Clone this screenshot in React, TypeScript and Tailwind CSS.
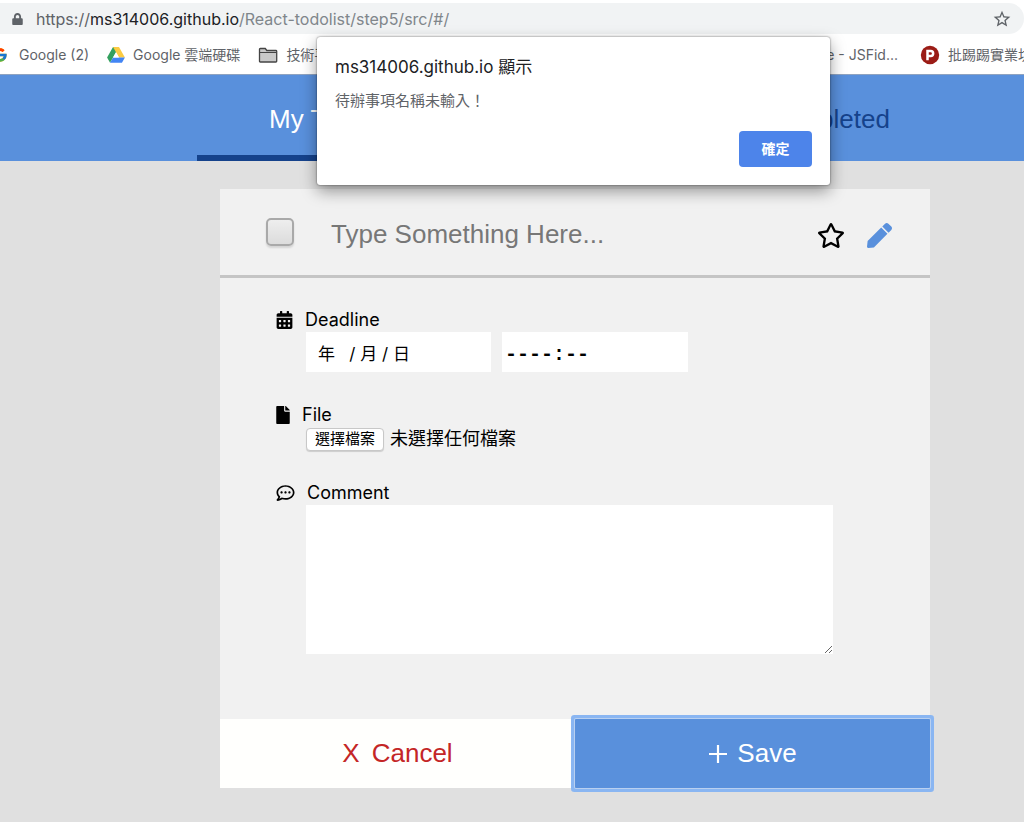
import React from "react";
import { FaLock, FaRegStar, FaPen, FaCalendarAlt, FaFile, FaRegCommentDots } from "react-icons/fa";
import { MdStarBorder } from "react-icons/md";
import { FcGoogle } from "react-icons/fc";

function DriveIcon() {
  return (
    <svg viewBox="0 0 87 78" className="h-4 w-[18px] shrink-0" aria-hidden="true">
      <path d="M29 0h29L29 51 14.500 77 0 51z" fill="#34a05f" />
      <path d="M29 0h29l29 51H58z" fill="#fbcb43" />
      <path d="M29 51h58L72.500 77h-58z" fill="#4285f4" />
      <path d="M43.500 25.500 58 51H29z" fill="#fff" />
    </svg>
  );
}

function FolderIcon() {
  return (
    <svg viewBox="0 0 20 16" className="h-4 w-5 shrink-0" aria-hidden="true">
      <path d="M1.500 14.200V2.300q0-.8.8-.8h5l1.500 2h9.100q.8 0 .8.800v9.900q0 .8-.8.8H2.300q-.8 0-.8-.8z" fill="#c9c9c9" stroke="#444" strokeWidth="1.300" />
      <path d="M1.500 5.500h17" stroke="#444" strokeWidth="1" />
    </svg>
  );
}

function PttIcon() {
  return (
    <svg viewBox="0 0 20 20" className="h-5 w-5 shrink-0" aria-hidden="true">
      <circle cx="10" cy="10" r="9.200" fill="#9b1c16" />
      <path d="M7.500 15.200V6h3.200a2.300 2.300 0 0 1 0 4.900H7.500" fill="none" stroke="#fff" strokeWidth="2.500" />
    </svg>
  );
}

function PlusIcon() {
  return (
    <svg viewBox="0 0 20 20" className="h-5 w-5" aria-hidden="true">
      <path d="M10 1v18M1 10h18" stroke="currentColor" strokeWidth="2.200" />
    </svg>
  );
}

function BrowserBar() {
  return (
    <header className="h-[75px] overflow-hidden border-b border-[#8fa3c0] bg-white pt-[3px]">
      <div className="flex h-[31px] items-center rounded-r-full bg-[#f1f3f4] pr-3 pl-3">
        <FaLock className="mr-[13px] h-3 w-[11px] shrink-0 text-[#5f6368]" />
        <p className="flex-1 text-base leading-6 text-[#80868b]">
          <span className="text-[#5f6368]">https://</span>
          <span className="text-[#202124]">ms314006.github.io</span>/React-todolist/step5/src/#/
        </p>
        <button type="button" aria-label="Bookmark">
          <MdStarBorder className="h-5 w-5 text-[#5f6368]" />
        </button>
      </div>
      <nav className="flex h-[41px] items-center text-sm whitespace-nowrap text-[#5f6368]">
        <a href="#google" className="-ml-2 flex items-center gap-[11px]">
          <FcGoogle className="h-4 w-4" />Google (2)
        </a>
        <a href="#drive" className="ml-[18px] flex items-center gap-2">
          <DriveIcon />Google 雲端硬碟
        </a>
        <a href="#tech" className="ml-[18px] flex items-center gap-2">
          <FolderIcon />技術平台
        </a>
        <a href="#fiddle" className="ml-auto">Code - JSFid...</a>
        <a href="#ptt" className="ml-[22px] flex w-[104px] items-center gap-2 overflow-hidden">
          <PttIcon />批踢踢實業坊
        </a>
      </nav>
    </header>
  );
}

function AlertDialog() {
  return (
    <div role="alertdialog" aria-labelledby="alert-title" className="absolute top-[37px] left-[317px] flex h-[148px] w-[513px] flex-col rounded-[3px] bg-white px-[18px] pt-[18px] pb-[18px] shadow-[0_6px_16px_rgba(0,0,0,0.4),0_0_2px_rgba(0,0,0,0.6)]">
      <h2 id="alert-title" className="text-[17px] leading-6 text-[#202124]">ms314006.github.io 顯示</h2>
      <p className="mt-3 text-[15px] leading-5 text-[#5f6368]">待辦事項名稱未輸入！</p>
      <button type="button" className="mt-auto h-9 w-[73px] self-end rounded bg-[#4d84ea] text-sm font-bold text-white">確定</button>
    </div>
  );
}

function Tabs() {
  return (
    <nav className="flex h-[86px] bg-[#5990dc] pl-[197px] font-['Liberation_Sans',sans-serif] text-[26px] text-[#15428b]">
      <a href="#/" className="flex w-[252px] items-center justify-center border-b-[6px] border-[#15428b] pt-2 text-white">My Tasks</a>
      <a href="#/progress" className="flex w-[252px] items-center justify-center pt-[2px]">In Progress</a>
      <a href="#/completed" className="flex w-[252px] items-center justify-center pt-[2px]">Completed</a>
    </nav>
  );
}

function TaskCard() {
  return (
    <form className="mt-7 mr-[94px] ml-[220px] bg-[#f1f1f1]">
      <div className="flex h-[89px] items-center border-b-[3px] border-[#c5c5c5] pr-[38px] pl-[46px]">
        <input type="checkbox" aria-label="Done" className="h-7 w-7 shrink-0 appearance-none rounded-[5px] border-2 border-[#a9a9a9] bg-linear-to-b from-[#eeeeee] to-[#dcdcdc] shadow-[0_2px_2px_rgba(0,0,0,0.12)]" />
        <input type="text" aria-label="Task name" placeholder="Type Something Here..." className="ml-[37px] h-11 min-w-0 flex-1 bg-transparent pt-1 font-['Liberation_Sans',sans-serif] text-[26px] outline-none placeholder:text-[#777]" />
        <div className="flex items-center gap-[22px] pt-[6px]">
          <button type="button" aria-label="Star"><FaRegStar className="h-[25px] w-7 text-black" /></button>
          <button type="button" aria-label="Edit"><FaPen className="h-[25px] w-[25px] text-[#5990dc]" /></button>
        </div>
      </div>
      <div className="pt-[30px] pr-[97px] pb-[65px] pl-14 text-lg leading-6 text-black">
        <label htmlFor="date" className="flex items-center gap-3"><FaCalendarAlt className="h-[18px] w-[17px]" />Deadline</label>
        <div className="flex gap-[11px] pl-[30px]">
          <input id="date" type="text" defaultValue="年   / 月 / 日" className="h-10 w-[185px] bg-white px-3 text-[17px]" />
          <input type="text" aria-label="Time" defaultValue="----:--" className="h-10 w-[186px] bg-white px-[3px] pt-1 font-['Liberation_Mono',monospace] text-xl font-bold" />
        </div>
        <label htmlFor="file" className="mt-[31px] flex items-center gap-3"><FaFile className="h-[18px] w-[14px]" />File</label>
        <div className="flex items-center gap-[6px] pl-[30px]">
          <input id="file" type="file" className="sr-only" />
          <label htmlFor="file" className="flex h-[23px] w-[78px] items-center justify-center rounded border border-[#c8c8c8] bg-white text-[15px] shadow-[0_1px_1px_rgba(0,0,0,0.15)]">選擇檔案</label>
          <span>未選擇任何檔案</span>
        </div>
        <label htmlFor="comment" className="mt-[30px] flex items-center gap-3"><FaRegCommentDots className="h-[18px] w-[19px]" />Comment</label>
        <div className="pl-[30px]">
          <textarea id="comment" className="block h-[149px] w-full bg-white outline-none" />
        </div>
      </div>
      <div className="grid h-[69px] grid-cols-2 font-['Liberation_Sans',sans-serif] text-[26px]">
        <button type="button" className="flex items-center justify-center gap-3 bg-[#fffffd] text-[#c42626]"><span>X</span><span>Cancel</span></button>
        <button type="submit" className="flex items-center justify-center gap-[9px] rounded-[1px] bg-[#5990dc] text-white shadow-[0_0_0_1px_#b9d0f0,0_0_0_4px_#8ab6f2]"><PlusIcon />Save</button>
      </div>
    </form>
  );
}

export default function App() {
  return (
    <div className="relative min-h-screen overflow-hidden bg-[#e0e0e0] font-['Inter','Noto_Sans_CJK_TC',sans-serif]">
      <BrowserBar />
      <main>
        <Tabs />
        <TaskCard />
      </main>
      <AlertDialog />
    </div>
  );
}
